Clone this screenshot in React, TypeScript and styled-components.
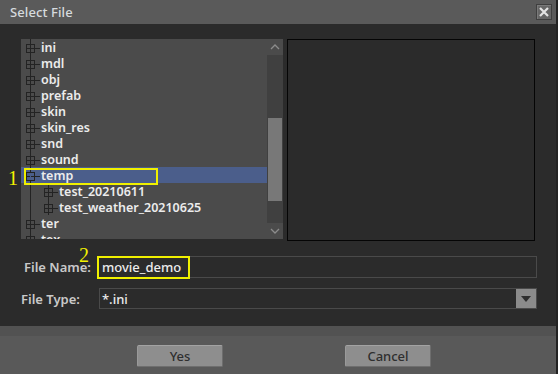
import React from "react";
import styled, { createGlobalStyle } from "styled-components";

const GlobalStyle = createGlobalStyle`
  html, body {
    margin: 0;
    padding: 0;
    background: #2b2b2b;
  }
  * {
    box-sizing: border-box;
  }
`;

const UI_FONT = `"Noto Sans", "Open Sans", "DejaVu Sans", sans-serif`;

const Window = styled.div`
  position: relative;
  width: 558px;
  height: 374px;
  display: flex;
  flex-direction: column;
  font-family: ${UI_FONT};
  border-right: 2px solid #232323;
  overflow: hidden;
`;

const TitleBar = styled.div`
  height: 24px;
  flex: none;
  display: flex;
  align-items: center;
  justify-content: space-between;
  padding: 0 4px 0 10px;
  background: #5a5a5a;
`;

const Title = styled.span`
  color: #d6dade;
  font-size: 13px;
  font-weight: 500;
  letter-spacing: 0.1px;
`;

const CloseButton = styled.button`
  width: 16px;
  height: 16px;
  padding: 0;
  display: flex;
  align-items: center;
  justify-content: center;
  background: #666;
  border: 1px solid #3f3f3f;
  box-shadow: inset 1px 1px 0 #7a7a7a;
`;

const Body = styled.div`
  flex: 1;
  display: flex;
  flex-direction: column;
  padding: 15px 21px 0 21px;
  background: #2b2b2b;
`;

const Browser = styled.div`
  display: flex;
  gap: 4px;
  height: 201px;
`;

const TreePanel = styled.div`
  width: 262px;
  height: 200px;
  display: flex;
  background: #4b4b4b;
`;

const TreeList = styled.ul`
  flex: 1;
  margin: 0;
  padding: 0;
  list-style: none;
  overflow: hidden;
`;

const TreeRow = styled.li<{ $selected?: boolean }>`
  height: 16px;
  display: flex;
  align-items: center;
  background: ${(p) => (p.$selected ? "#4b5e8b" : "transparent")};
`;

const TreeLabel = styled.span`
  color: #ececec;
  font-size: 12.5px;
  font-weight: 600;
  line-height: 16px;
  padding-top: 1px;
  white-space: nowrap;
`;

const ScrollBar = styled.div`
  width: 16px;
  display: flex;
  flex-direction: column;
`;

const ScrollArrow = styled.div`
  height: 16px;
  flex: none;
  display: flex;
  align-items: center;
  justify-content: center;
  background: #4b4b4b;
`;

const ScrollTrack = styled.div`
  flex: 1;
  display: flex;
  flex-direction: column;
  background: #404040;
  padding: 63px 1px 22px 1px;
`;

const ScrollThumb = styled.div`
  flex: 1;
  background: #787878;
`;

const Preview = styled.div`
  width: 248px;
  height: 202px;
  border: 1px solid #050505;
  background: #2b2b2b;
`;

const Form = styled.div`
  display: grid;
  grid-template-columns: 77px 439px;
  row-gap: 10px;
  margin-top: 16px;
`;

const Label = styled.label<{ $indent: number }>`
  display: flex;
  align-items: center;
  padding-left: ${(p) => p.$indent}px;
  color: #c9c9c9;
  font-size: 13px;
  font-weight: 600;
`;

const TextInput = styled.div`
  height: 22px;
  display: flex;
  align-items: center;
  padding-left: 3px;
  border: 1px solid #4a4a4a;
  background: #2b2b2b;
  color: #ececec;
  font-size: 13px;
  font-weight: 500;
`;

const Combo = styled.div`
  height: 21px;
  display: flex;
  align-items: center;
  border: 1px solid #4a4a4a;
  background: #2b2b2b;
  margin-left: 1px;
`;

const ComboText = styled.span`
  flex: 1;
  padding-left: 2px;
  color: #ececec;
  font-size: 13px;
  font-weight: 500;
`;

const ComboButton = styled.div`
  width: 20px;
  height: 100%;
  display: flex;
  align-items: center;
  justify-content: center;
  background: #8b8b8b;
`;

const Footer = styled.div`
  height: 48px;
  flex: none;
  display: flex;
  align-items: flex-start;
  gap: 122px;
  padding: 9px 0 0 137px;
  background: #595959;
  border-top: 10px solid #525252;
`;

const Button = styled.button`
  width: 86px;
  height: 22px;
  padding: 0;
  border: 1px solid #6e6e6e;
  border-top-color: #a3a3a3;
  border-left-color: #9a9a9a;
  border-radius: 2px;
  background: #8e8e8e;
  color: #2f2f2f;
  font-family: ${UI_FONT};
  font-size: 13px;
  font-weight: 500;
`;

const Mark = styled.span<{ $x: number; $y: number }>`
  position: absolute;
  left: ${(p) => p.$x}px;
  top: ${(p) => p.$y}px;
  color: #f2f200;
  font-family: "Liberation Serif", "DejaVu Serif", serif;
  font-size: 20px;
  line-height: 20px;
`;

const Frame = styled.div<{ $x: number; $y: number; $w: number; $h: number }>`
  position: absolute;
  left: ${(p) => p.$x}px;
  top: ${(p) => p.$y}px;
  width: ${(p) => p.$w}px;
  height: ${(p) => p.$h}px;
  border: 2px solid #f0f000;
  pointer-events: none;
`;

type Node = {
  name: string;
  depth: number;
  expanded?: boolean;
  selected?: boolean;
};

const nodes: Node[] = [
  { name: "ini", depth: 0 },
  { name: "mdl", depth: 0 },
  { name: "obj", depth: 0 },
  { name: "prefab", depth: 0 },
  { name: "skin", depth: 0 },
  { name: "skin_res", depth: 0 },
  { name: "snd", depth: 0 },
  { name: "sound", depth: 0 },
  { name: "temp", depth: 0, expanded: true, selected: true },
  { name: "test_20210611", depth: 1 },
  { name: "test_weather_20210625", depth: 1 },
  { name: "ter", depth: 0 },
  { name: "tex", depth: 0 },
];

const LINE = "#232323";

function Expander({ depth, expanded }: { depth: number; expanded?: boolean }) {
  const off = depth * 18;
  const w = 20 + off;
  const cx = off + 9.5;
  return (
    <svg width={w} height={16} viewBox={`0 0 ${w} 16`} style={{ flex: "none" }}>
      {depth > 0 && <line x1={9.5} y1={0} x2={9.5} y2={16} stroke={LINE} />}
      <line x1={cx} y1={0} x2={cx} y2={16} stroke={LINE} />
      <line x1={off + 5} y1={9.5} x2={off + 19} y2={9.5} stroke={LINE} />
      <rect x={off + 5.5} y={5.5} width={8} height={8} fill="none" stroke={LINE} />
      {expanded && <line x1={cx} y1={6} x2={cx} y2={13} stroke="#4b5e8b" />}
    </svg>
  );
}

function Chevron({ up }: { up?: boolean }) {
  return (
    <svg width={10} height={6} viewBox="0 0 10 6">
      <polyline
        points={up ? "1,5 5,1 9,5" : "1,1 5,5 9,1"}
        fill="none"
        stroke="#8c8c8c"
        strokeWidth={1.3}
      />
    </svg>
  );
}

export default function App() {
  return (
    <>
      <GlobalStyle />
      <Window>
        <TitleBar>
          <Title>Select File</Title>
          <CloseButton aria-label="close">
            <svg width={12} height={12} viewBox="0 0 12 12">
              <path d="M2 2 L10 10 M10 2 L2 10" stroke="#e4e4e4" strokeWidth={2.2} />
            </svg>
          </CloseButton>
        </TitleBar>
        <Body>
          <Browser>
            <TreePanel>
              <TreeList>
                {nodes.map((n) => (
                  <TreeRow key={n.name} $selected={n.selected}>
                    <Expander depth={n.depth} expanded={n.expanded} />
                    <TreeLabel>{n.name}</TreeLabel>
                  </TreeRow>
                ))}
              </TreeList>
              <ScrollBar>
                <ScrollArrow>
                  <Chevron up />
                </ScrollArrow>
                <ScrollTrack>
                  <ScrollThumb />
                </ScrollTrack>
                <ScrollArrow>
                  <Chevron />
                </ScrollArrow>
              </ScrollBar>
            </TreePanel>
            <Preview />
          </Browser>
          <Form>
            <Label $indent={3}>File Name:</Label>
            <TextInput>movie_demo</TextInput>
            <Label $indent={0}>File Type:</Label>
            <Combo>
              <ComboText>*.ini</ComboText>
              <ComboButton>
                <svg width={10} height={6} viewBox="0 0 10 6">
                  <polygon points="0,0 10,0 5,6" fill="#2e2e2e" />
                </svg>
              </ComboButton>
            </Combo>
          </Form>
        </Body>
        <Footer>
          <Button>Yes</Button>
          <Button>Cancel</Button>
        </Footer>

        <Frame $x={24} $y={168} $w={134} $h={17} />
        <Mark $x={8} $y={168}>1</Mark>
        <Frame $x={97} $y={256} $w={93} $h={23} />
        <Mark $x={79} $y={245}>2</Mark>
      </Window>
    </>
  );
}
